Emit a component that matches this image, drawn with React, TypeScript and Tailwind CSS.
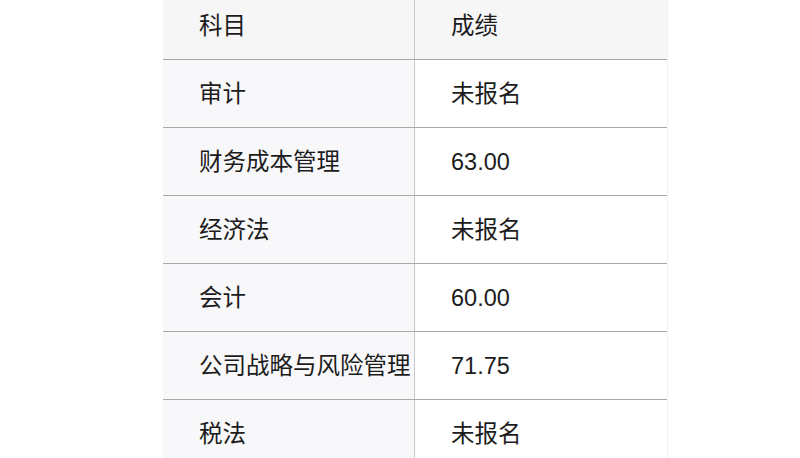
import React from 'react';

const rows: [string, string][] = [
    ['审计', '未报名'],
    ['财务成本管理', '63.00'],
    ['经济法', '未报名'],
    ['会计', '60.00'],
    ['公司战略与风险管理', '71.75'],
    ['税法', '未报名'],
];

const font = { fontFamily: '"Liberation Sans", "Noto Sans CJK SC", sans-serif' };

const App = () => {
    return (
        <div className="h-[458px] w-[800px] overflow-hidden bg-white" style={font}>
            <div className="-mt-2 ml-[163px] w-[505px] border-r border-[#f0f0f0] text-[23.5px] text-[#1c1c1c]">
                <div className="flex h-[68px] border-b border-[#a9a9a9] bg-[#f6f6f7]">
                    <div className="flex w-[252px] items-center border-r border-[#c9c9c9] pl-[36px] pt-[3px]">科目</div>
                    <div className="flex flex-1 items-center pl-[36px] pt-[3px]">成绩</div>
                </div>
                {rows.map(([subject, score]) => (
                    <div key={subject} className="flex h-[68px] border-b border-[#a9a9a9]">
                        <div className="flex w-[252px] shrink-0 items-center whitespace-nowrap border-r border-[#c9c9c9] bg-[#f8f8fa] pl-[36px] pt-[2px]">
                            {subject}
                        </div>
                        <div className="flex flex-1 items-center bg-white pl-[36px] pt-[2px]">{score}</div>
                    </div>
                ))}
            </div>
        </div>
    );
};

export default App;
